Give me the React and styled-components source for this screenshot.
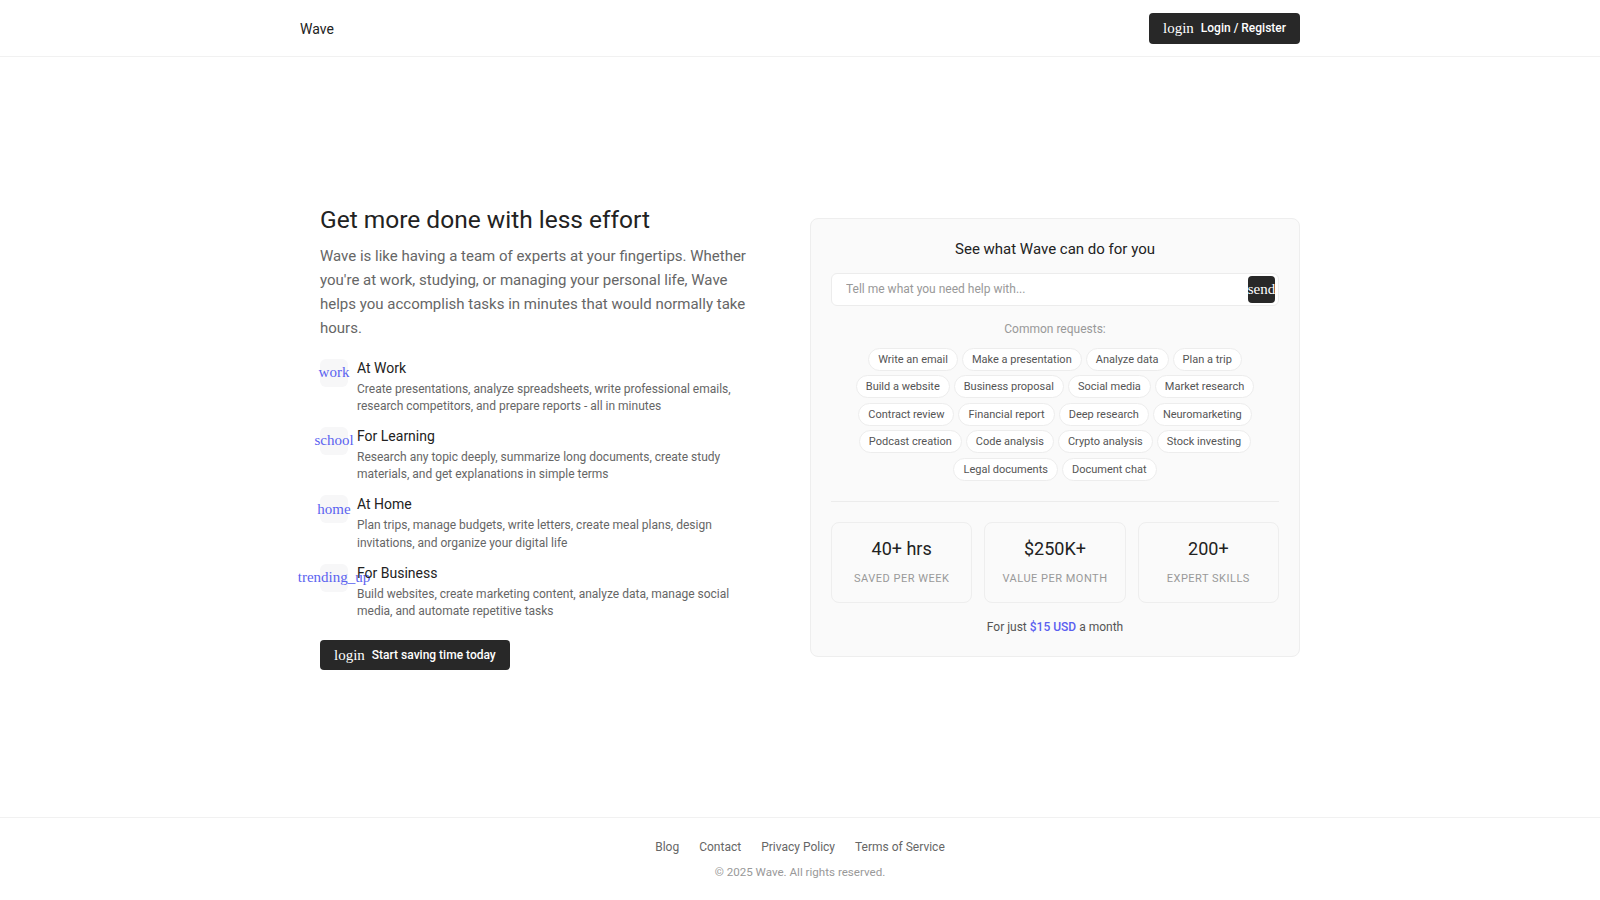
import styled, { createGlobalStyle } from 'styled-components';

const GlobalStyle = createGlobalStyle`
    html, body {
        margin: 0;
        padding: 0;
        background: #fff;
    }
    body {
        font-family: Roboto, "Liberation Sans", sans-serif;
        color: #222;
        -webkit-font-smoothing: antialiased;
    }
    * {
        box-sizing: border-box;
    }
`

const Page = styled.div`
    min-height: 100vh;
    display: flex;
    flex-direction: column;
`
const Header = styled.header`
    height: 57px;
    border-bottom: 1px solid #f1f1f1;
    flex-shrink: 0;
`
const HeaderInner = styled.div`
    max-width: 1000px;
    height: 100%;
    margin: 0 auto;
    display: flex;
    align-items: center;
    justify-content: space-between;
`
const Logo = styled.div`
    font-size: 14px;
    color: #222;
    padding-top: 2px;
`
const DarkButton = styled.button`
    height: ${p => p.$h || 30}px;
    padding: 0 14px;
    display: inline-flex;
    align-items: center;
    gap: 7px;
    border: none;
    border-radius: 4px;
    background: #282828;
    color: #fff;
    font-family: Roboto, sans-serif;
    font-size: 12px;
    font-weight: 500;
    cursor: pointer;
`
const Glyph = styled.span`
    font-family: "Liberation Serif", serif;
    font-size: 15px;
    font-weight: 400;
    line-height: 1;
    white-space: nowrap;
    color: ${p => p.$color || 'inherit'};
`
const Main = styled.main`
    flex: 1;
    display: flex;
    align-items: center;
    justify-content: center;
`
const Hero = styled.div`
    width: 1000px;
    display: grid;
    grid-template-columns: 1fr 1fr;
    gap: 20px;
    align-items: center;
`
const Left = styled.div`
    padding: 0 30px 0 20px;
`
const Title = styled.h1`
    margin: 0 0 8px;
    font-size: 24.5px;
    line-height: 32px;
    font-weight: 400;
    color: #222;
`
const Lead = styled.p`
    margin: 0;
    font-size: 15px;
    line-height: 24px;
    color: #666;
`
const Features = styled.div`
    margin-top: 18px;
    display: flex;
    flex-direction: column;
    gap: 10.5px;
`
const Feature = styled.div`
    display: flex;
    align-items: flex-start;
    gap: 9px;
`
const IconBox = styled.div`
    width: 28px;
    height: 28px;
    margin-top: 1px;
    flex-shrink: 0;
    border-radius: 6px;
    background: #f7f7f8;
    display: flex;
    align-items: center;
    justify-content: center;
`
const FeatureTitle = styled.div`
    font-size: 14px;
    line-height: 20px;
    font-weight: 400;
    color: #222;
    margin-bottom: 3px;
`
const FeatureText = styled.div`
    font-size: 12px;
    line-height: 17.4px;
    color: #666;
`
const CtaRow = styled.div`
    margin-top: 20px;
`
const Card = styled.div`
    background: #fafafa;
    border: 1px solid #eeeeee;
    border-radius: 8px;
    padding: 20px;
    display: flex;
    flex-direction: column;
`
const CardTitle = styled.div`
    text-align: center;
    font-size: 15px;
    line-height: 20px;
    font-weight: 400;
    color: #222;
`
const InputWrap = styled.div`
    position: relative;
    margin-top: 14px;
    height: 33px;
    background: #fff;
    border: 1px solid #ececec;
    border-radius: 6px;
    display: flex;
    align-items: center;
    padding: 0 40px 0 12px;
`
const Input = styled.input`
    flex: 1;
    border: none;
    outline: none;
    background: transparent;
    font-family: Roboto, sans-serif;
    font-size: 12px;
    color: #333;
    &::placeholder {
        color: #999;
    }
`
const SendButton = styled.button`
    position: absolute;
    right: 3px;
    top: 2px;
    width: 27px;
    height: 27px;
    padding: 0;
    border: none;
    border-radius: 4px;
    background: #282828;
    color: #fff;
    display: flex;
    align-items: center;
    justify-content: center;
    overflow: visible;
`
const Caption = styled.div`
    margin-top: 15px;
    text-align: center;
    font-size: 12px;
    line-height: 16px;
    color: #999;
`
const Chips = styled.div`
    margin-top: 11px;
    display: flex;
    flex-wrap: wrap;
    justify-content: center;
    gap: 4.5px 4px;
`
const Chip = styled.button`
    height: 23px;
    padding: 0 9px;
    border: 1px solid #ededed;
    border-radius: 999px;
    background: #fff;
    font-family: Roboto, sans-serif;
    font-size: 11px;
    color: #555;
    cursor: pointer;
`
const Divider = styled.div`
    margin: 20px 0;
    border-top: 1px solid #ececec;
`
const Stats = styled.div`
    display: grid;
    grid-template-columns: repeat(3, 1fr);
    gap: 12px;
`
const Stat = styled.div`
    border: 1px solid #eeeeee;
    border-radius: 8px;
    background: #fafafa;
    padding: 14px 8px 15px;
    display: flex;
    flex-direction: column;
    align-items: center;
`
const StatValue = styled.div`
    font-size: 18px;
    line-height: 24px;
    font-weight: 400;
    color: #222;
    margin-bottom: 10px;
`
const StatLabel = styled.div`
    font-size: 11px;
    line-height: 16px;
    letter-spacing: 0.5px;
    text-transform: uppercase;
    color: #999;
`
const Price = styled.div`
    margin-top: 15px;
    text-align: center;
    font-size: 12px;
    line-height: 18px;
    color: #555;
`
const Accent = styled.span`
    color: #5b5ff0;
    font-weight: 500;
`
const Footer = styled.footer`
    border-top: 1px solid #f1f1f1;
    padding: 20px 0;
    text-align: center;
    flex-shrink: 0;
`
const FooterLinks = styled.nav`
    display: flex;
    justify-content: center;
    gap: 20px;
`
const FooterLink = styled.a`
    font-size: 12px;
    line-height: 18px;
    color: #666;
    text-decoration: none;
`
const Copy = styled.div`
    margin-top: 8px;
    font-size: 11.6px;
    line-height: 16px;
    color: #999;
`

const features = [
    { icon: 'work', title: 'At Work', text: 'Create presentations, analyze spreadsheets, write professional emails, research competitors, and prepare reports - all in minutes' },
    { icon: 'school', title: 'For Learning', text: 'Research any topic deeply, summarize long documents, create study materials, and get explanations in simple terms' },
    { icon: 'home', title: 'At Home', text: 'Plan trips, manage budgets, write letters, create meal plans, design invitations, and organize your digital life' },
    { icon: 'trending_up', title: 'For Business', text: 'Build websites, create marketing content, analyze data, manage social media, and automate repetitive tasks' },
]

const requests = [
    'Write an email', 'Make a presentation', 'Analyze data', 'Plan a trip',
    'Build a website', 'Business proposal', 'Social media', 'Market research',
    'Contract review', 'Financial report', 'Deep research', 'Neuromarketing',
    'Podcast creation', 'Code analysis', 'Crypto analysis', 'Stock investing',
    'Legal documents', 'Document chat',
]

const stats = [
    { value: '40+ hrs', label: 'Saved per week' },
    { value: '$250K+', label: 'Value per month' },
    { value: '200+', label: 'Expert skills' },
]

export default function App(){
    return(
        <Page>
            <GlobalStyle/>
            <Header>
                <HeaderInner>
                    <Logo>Wave</Logo>
                    <DarkButton $h={31}>
                        <Glyph>login</Glyph>
                        Login / Register
                    </DarkButton>
                </HeaderInner>
            </Header>
            <Main>
                <Hero>
                    <Left>
                        <Title>Get more done with less effort</Title>
                        <Lead>
                            Wave is like having a team of experts at your fingertips. Whether you're at work, studying, or managing your personal life, Wave helps you accomplish tasks in minutes that would normally take hours.
                        </Lead>
                        <Features>
                            {features.map(f => (
                                <Feature key={f.title}>
                                    <IconBox><Glyph $color="#5b63f0">{f.icon}</Glyph></IconBox>
                                    <div>
                                        <FeatureTitle>{f.title}</FeatureTitle>
                                        <FeatureText>{f.text}</FeatureText>
                                    </div>
                                </Feature>
                            ))}
                        </Features>
                        <CtaRow>
                            <DarkButton>
                                <Glyph>login</Glyph>
                                Start saving time today
                            </DarkButton>
                        </CtaRow>
                    </Left>
                    <Card>
                        <CardTitle>See what Wave can do for you</CardTitle>
                        <InputWrap>
                            <Input placeholder="Tell me what you need help with..."/>
                            <SendButton><Glyph>send</Glyph></SendButton>
                        </InputWrap>
                        <Caption>Common requests:</Caption>
                        <Chips>
                            {requests.map(r => <Chip key={r}>{r}</Chip>)}
                        </Chips>
                        <Divider/>
                        <Stats>
                            {stats.map(s => (
                                <Stat key={s.label}>
                                    <StatValue>{s.value}</StatValue>
                                    <StatLabel>{s.label}</StatLabel>
                                </Stat>
                            ))}
                        </Stats>
                        <Price>For just <Accent>$15 USD</Accent> a month</Price>
                    </Card>
                </Hero>
            </Main>
            <Footer>
                <FooterLinks>
                    <FooterLink href="#">Blog</FooterLink>
                    <FooterLink href="#">Contact</FooterLink>
                    <FooterLink href="#">Privacy Policy</FooterLink>
                    <FooterLink href="#">Terms of Service</FooterLink>
                </FooterLinks>
                <Copy>© 2025 Wave. All rights reserved.</Copy>
            </Footer>
        </Page>
    )
}
